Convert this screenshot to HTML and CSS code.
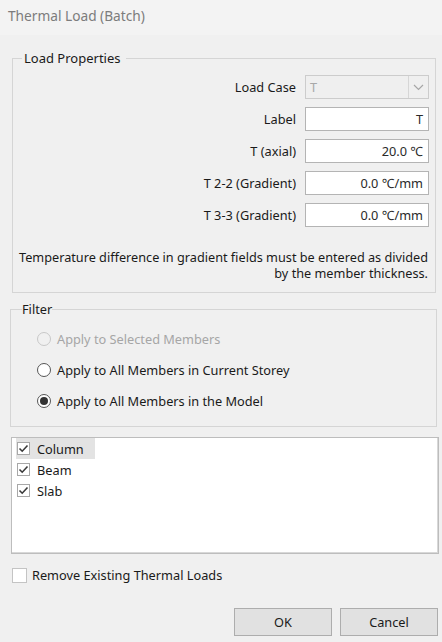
FILE: index.html
```html
<!DOCTYPE html>
<html>
<head>
<meta charset="utf-8">
<link rel="stylesheet" href="styles.css">
</head>
<body>
<div class="window">
  <div class="titlebar">Thermal Load (Batch)</div>
  <div class="content">
    <fieldset class="group load">
      <legend>Load Properties</legend>
      <div class="rows">
        <div class="row">
          <span class="lbl">Load Case</span>
          <div class="combo">
            <span class="combo-text">T</span>
            <span class="combo-btn">
              <svg width="11" height="7" viewBox="0 0 11 7"><path d="M1 1 L5.5 5.5 L10 1" fill="none" stroke="#a6a6a6" stroke-width="1.2"/></svg>
            </span>
          </div>
        </div>
        <div class="row"><span class="lbl">Label</span><div class="field">T</div></div>
        <div class="row"><span class="lbl">T (axial)</span><div class="field">20.0 ℃</div></div>
        <div class="row"><span class="lbl">T 2-2 (Gradient)</span><div class="field">0.0 ℃/mm</div></div>
        <div class="row"><span class="lbl">T 3-3 (Gradient)</span><div class="field">0.0 ℃/mm</div></div>
      </div>
      <p class="note">Temperature difference in gradient fields must be entered as divided<br>by the member thickness.</p>
    </fieldset>

    <fieldset class="group filter">
      <legend>Filter</legend>
      <div class="radio disabled"><span class="dot"></span><span>Apply to Selected Members</span></div>
      <div class="radio"><span class="dot"></span><span>Apply to All Members in Current Storey</span></div>
      <div class="radio"><span class="dot checked"></span><span>Apply to All Members in the Model</span></div>
    </fieldset>

    <div class="list">
      <div class="item selected"><span class="cb"><svg width="13" height="13" viewBox="0 0 13 13"><path d="M2.5 6.5 L5.2 9.2 L10.5 3.5" fill="none" stroke="#3a3a3a" stroke-width="1.6"/></svg></span><span>Column</span></div>
      <div class="item"><span class="cb"><svg width="13" height="13" viewBox="0 0 13 13"><path d="M2.5 6.5 L5.2 9.2 L10.5 3.5" fill="none" stroke="#3a3a3a" stroke-width="1.6"/></svg></span><span>Beam</span></div>
      <div class="item"><span class="cb"><svg width="13" height="13" viewBox="0 0 13 13"><path d="M2.5 6.5 L5.2 9.2 L10.5 3.5" fill="none" stroke="#3a3a3a" stroke-width="1.6"/></svg></span><span>Slab</span></div>
    </div>

    <div class="remove"><span class="cb big"></span><span>Remove Existing Thermal Loads</span></div>

    <div class="buttons">
      <button class="btn">OK</button>
      <button class="btn">Cancel</button>
    </div>
  </div>
</div>
</body>
</html>
```
FILE: styles.css
```css
* { box-sizing: border-box; }
html, body { margin: 0; padding: 0; }
body {
  width: 442px;
  height: 642px;
  background: #f0f0f0;
  font-family: "Noto Sans", "Open Sans", sans-serif;
  font-size: 12.75px;
  color: #1a1a1a;
  overflow: hidden;
}
.window { width: 442px; height: 642px; }
.titlebar {
  height: 35px;
  padding: 8px 0 0 8px;
  line-height: 16px;
  font-size: 13.7px;
  color: #7c7c7c;
  background: #f3f3f3;
}
.content { display: flex; flex-direction: column; }

.group {
  margin: 0;
  border: 1px solid #d5d5d5;
  min-width: 0;
}
.group legend {
  line-height: 16px;
  color: #1a1a1a;
}
.load {
  margin: 15px 0 0 12px;
  width: 424px;
  padding: 9px 6px 11px 6px;
}
.load legend { margin-left: 3px; padding: 0 5px 0 2px; font-size: 13px; }
.rows { display: flex; flex-direction: column; gap: 8px; }
.row {
  display: flex;
  justify-content: flex-end;
  align-items: center;
  gap: 9px;
  height: 24px;
}
.field {
  width: 124px;
  height: 24px;
  background: #fff;
  border: 1px solid #b4b4b4;
  text-align: right;
  padding-right: 5px;
  line-height: 22px;
  color: #2a2a2a;
}
.combo {
  width: 124px;
  height: 24px;
  background: #efefef;
  border: 1px solid #cccccc;
  display: flex;
}
.combo-text {
  flex: 1;
  padding-left: 4px;
  line-height: 22px;
  color: #a8a8a8;
}
.combo-btn {
  width: 20px;
  border-left: 1px solid #d6d6d6;
  display: flex;
  align-items: center;
  justify-content: center;
}
.note {
  margin: 22px 1px 0 0;
  text-align: right;
  line-height: 16px;
  white-space: nowrap;
  font-size: 12.7px;
}

.filter {
  margin: 8px 0 0 10px;
  width: 427px;
  padding: 11px 6px 14px 11px;
  display: flex;
  flex-direction: column;
  gap: 9px;
}
.filter legend { padding: 0; }
.radio {
  display: flex;
  align-items: center;
  height: 22px;
  gap: 6px;
  padding-left: 15px;
}
.radio.disabled { color: #a6a6a6; }
.dot {
  width: 14px;
  height: 14px;
  border-radius: 50%;
  border: 1px solid #555;
  background: #fff;
  display: flex;
  align-items: center;
  justify-content: center;
}
.radio.disabled .dot { border-color: #c8c8c8; background: #f0f0f0; }
.dot.checked::after {
  content: "";
  width: 8px;
  height: 8px;
  border-radius: 50%;
  background: #333;
}

.list {
  margin: 10px 0 0 11px;
  width: 428px;
  height: 117px;
  background: #fff;
  border: 1px solid #bdbdbd;
  box-shadow: inset -1px -1px 0 #d8d8d8;
  padding: 0 0 0 4px;
}
.item {
  display: flex;
  align-items: center;
  height: 21px;
  width: fit-content;
  padding: 0 11px 0 1px;
  gap: 7px;
}
.item.selected { background: #e3e3e3; }
.cb {
  width: 13px;
  height: 13px;
  border: 1px solid #a8a8a8;
  background: #fff;
  display: flex;
  align-items: center;
  justify-content: center;
}
.cb svg { display: block; flex: none; }
.remove {
  margin: 11px 0 0 12px;
  height: 20px;
  display: flex;
  align-items: center;
  gap: 5px;
}
.cb.big { width: 15px; height: 15px; border-color: #c4c4c4; }

.buttons {
  margin-top: 23px;
  display: flex;
  justify-content: flex-end;
  gap: 8px;
  padding-right: 4px;
}
.btn {
  width: 98px;
  height: 28px;
  background: #e1e1e1;
  border: 1px solid #adadad;
  font-family: inherit;
  font-size: 12.75px;
  color: #1a1a1a;
  padding: 0;
}
```
